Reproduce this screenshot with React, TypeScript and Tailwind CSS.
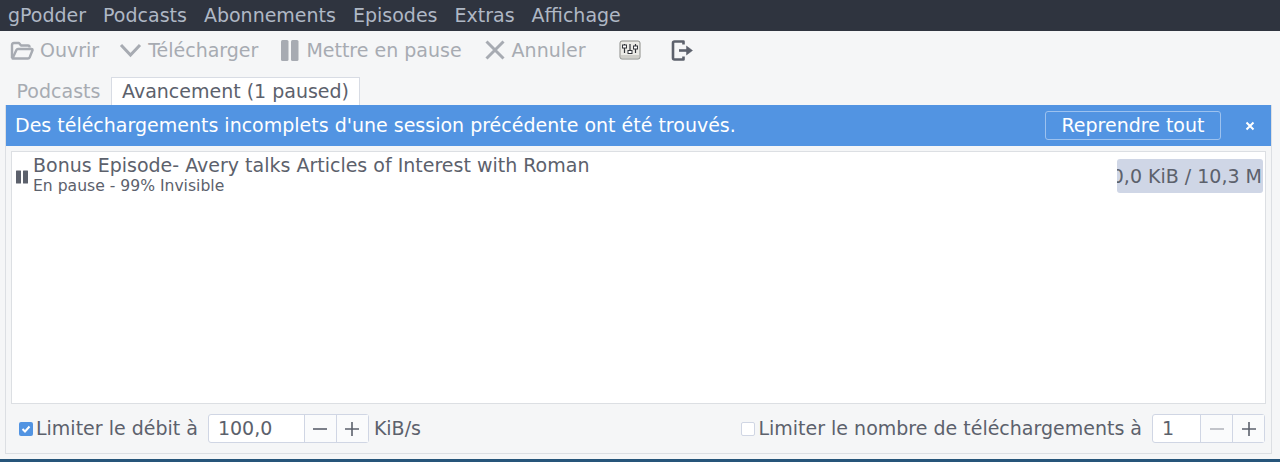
const FONT = "font-['DejaVu_Sans',sans-serif]";

function Tool({ icon, label }: { icon: React.ReactNode; label: string }) {
  return (
    <div className="flex items-center gap-[6px] text-[#a7abb2]">
      {icon}
      <span>{label}</span>
    </div>
  );
}

function Stepper({ value, inputW, minusDim }: { value: string; inputW: string; minusDim?: boolean }) {
  return (
    <div className="flex h-[29px] items-stretch rounded-[3px] border border-[#d0d6e4] bg-white">
      <div className={`flex items-center pl-[9px] ${inputW}`}>{value}</div>
      <div className={`flex w-[32px] items-center justify-center border-l border-[#d0d6e4] bg-[#fafbfc] text-[#5c616c]`}>
        <svg width="16" height="16" viewBox="0 0 16 16"><path d="M1 8h14" stroke={minusDim ? "#b4b7bd" : "#5c616c"} strokeWidth="1.6" /></svg>
      </div>
      <div className="flex w-[32px] items-center justify-center border-l border-[#d0d6e4] bg-[#fafbfc]">
        <svg width="16" height="16" viewBox="0 0 16 16"><path d="M1 8h14M8 1v14" stroke="#5c616c" strokeWidth="1.6" /></svg>
      </div>
    </div>
  );
}

export default function App() {
  return (
    <div className={`${FONT} flex h-[462px] w-[1280px] flex-col overflow-hidden bg-[#f5f6f7] text-[19px] text-[#5c616c]`}>
      <div className="flex h-[31px] shrink-0 items-center gap-[17px] bg-[#2f343f] px-[8px] text-[#afb8c5]">
        <span>gPodder</span>
        <span>Podcasts</span>
        <span>Abonnements</span>
        <span>Episodes</span>
        <span>Extras</span>
        <span>Affichage</span>
      </div>

      <div className="flex h-[38px] shrink-0 items-center pl-[10px]">
        <Tool label="Ouvrir" icon={
          <svg width="24" height="24" viewBox="0 0 24 24" fill="none" stroke="#a7abb2" strokeWidth="2.4" strokeLinejoin="round">
            <path d="M2 20V7c0-1 .6-2 2-2h5l2 2.5h7c1 0 1.6.6 1.6 2" />
            <path d="M2.500 20.500h15.500c.8 0 1.400-.5 1.700-1.200L22.600 12c0-.6-.3-1-1-1H8c-.8 0-1.300.4-1.600 1L2.500 20.500z" />
          </svg>
        } />
        <div className="ml-[20px]">
          <Tool label="Télécharger" icon={
            <svg width="23" height="24" viewBox="0 0 23 24" fill="none" stroke="#a7abb2" strokeWidth="3"><path d="M2 7l9.500 10L21 7" /></svg>
          } />
        </div>
        <div className="ml-[22px]">
          <Tool label="Mettre en pause" icon={
            <svg width="20" height="24" viewBox="0 0 20 24" fill="#a7abb2"><rect x="1" y="2" width="7.500" height="21" rx="1.500" /><rect x="11" y="2" width="7.500" height="21" rx="1.500" /></svg>
          } />
        </div>
        <div className="ml-[22px]">
          <Tool label="Annuler" icon={
            <svg width="22" height="24" viewBox="0 0 22 24" fill="none" stroke="#a7abb2" strokeWidth="3"><path d="M2.500 3.500l17 17M19.500 3.500l-17 17" /></svg>
          } />
        </div>
        <svg className="ml-[33px]" width="22" height="20" viewBox="0 0 22 20">
          <rect x="1" y="1" width="20" height="18" rx="2" fill="#ecebe7" stroke="#8b8c88" />
          <rect x="2" y="15" width="18" height="3" fill="#cfcec9" />
          <rect x="3" y="4" width="16" height="9" fill="#ecebe7" />
          <path d="M5.500 4v9M11 4v10M16.500 4v9" stroke="#33353a" strokeWidth="1.200" />
          <rect x="3.500" y="5" width="4" height="3" fill="#fff" stroke="#33353a" />
          <rect x="9" y="10.500" width="4" height="3" fill="#fff" stroke="#33353a" />
          <rect x="14.500" y="6" width="4" height="3" fill="#fff" stroke="#33353a" />
        </svg>
        <svg className="ml-[29px]" width="24" height="24" viewBox="0 0 24 24" fill="none" stroke="#5c616c" strokeWidth="2.600" strokeLinejoin="round">
          <path d="M13.500 6.500V3.500h-9c-1 0-1.500.5-1.500 1.500v15c0 1 .5 1.500 1.500 1.500h9v-3" />
          <path d="M9 12.500h8" />
          <path d="M16.500 8v9l6-4.500z" fill="#5c616c" strokeWidth="0.500" />
        </svg>
      </div>

      <div className="flex h-[36px] shrink-0 items-end pl-[6px]">
        <div className="flex h-[28px] w-[105px] items-center justify-center text-[#a7abb2]">Podcasts</div>
        <div className="flex h-[28px] items-center border border-b-0 border-[#d8dce4] bg-white px-[10px]">Avancement (1 paused)</div>
      </div>

      <div className="ml-[5px] mr-[8px] flex h-[349px] shrink-0 flex-col border border-t-0 border-[#dcdfe3]">
        <div className="flex h-[41px] shrink-0 items-center bg-[#5294e2] pl-[9px] pr-[16px] text-white">
          <span className="flex-1">Des téléchargements incomplets d'une session précédente ont été trouvés.</span>
          <div className="flex h-[29px] w-[176px] items-center justify-center rounded-[3px] border border-[#9dc2ef]">Reprendre tout</div>
          <svg className="ml-[24px]" width="10" height="10" viewBox="0 0 10 10"><path d="M1.500 1.500l7 7M8.500 1.500l-7 7" stroke="#fff" strokeWidth="2" /></svg>
        </div>

        <div className="mx-[5px] mt-[5px] flex h-[253px] shrink-0 items-start border border-[#dcdfe3] bg-white pl-[4px] pr-[2px] pt-[2px]">
          <svg className="mt-[16px]" width="13" height="14" viewBox="0 0 13 14" fill="#5c616c"><rect x="0" y="0.500" width="5" height="13" rx="0.500" /><rect x="7" y="0.500" width="5" height="13" rx="0.500" /></svg>
          <div className="ml-[4px] flex-1 leading-none">
            <div className="h-[20px] leading-[22px]">Bonus Episode- Avery talks Articles of Interest with Roman</div>
            <div className="mt-[3px] text-[15.6px] leading-[18px]">En pause - 99% Invisible</div>
          </div>
          <div className="mt-[5px] flex h-[34px] w-[146px] items-center justify-center overflow-hidden whitespace-nowrap rounded-[3px] bg-[#cfd6e6]">10,0 KiB / 10,3 MiB</div>
        </div>

        <div className="flex flex-1 items-center pl-[13px] pr-[6px]">
          <span className="flex h-[14px] w-[14px] items-center justify-center rounded-[2px] bg-[#5294e2]">
            <svg width="10" height="10" viewBox="0 0 10 10" fill="none" stroke="#fff" strokeWidth="2"><path d="M1.500 5l2.500 2.500 4.500-5" /></svg>
          </span>
          <span className="ml-[3px]">Limiter le débit à</span>
          <div className="ml-[10px]"><Stepper value="100,0" inputW="w-[95px]" /></div>
          <span className="ml-[5px]">KiB/s</span>
          <span className="ml-auto h-[14px] w-[14px] rounded-[2px] border border-[#d0d6e4] bg-white" />
          <span className="ml-[3px]">Limiter le nombre de téléchargements à</span>
          <div className="ml-[10px]"><Stepper value="1" inputW="w-[47px]" minusDim /></div>
        </div>
      </div>

      <div className="mt-[5px] h-[3px] w-full bg-[#26557a]" />
    </div>
  );
}
